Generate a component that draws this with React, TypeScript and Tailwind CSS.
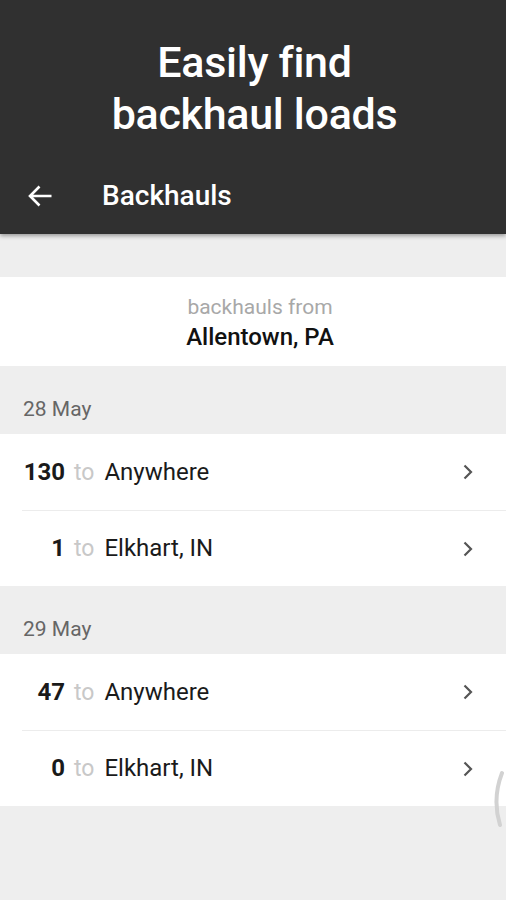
import React from 'react';

type Row = { count: number; dest: string };
type Group = { date: string; rows: Row[] };

const groups: Group[] = [
  { date: '28 May', rows: [{ count: 130, dest: 'Anywhere' }, { count: 1, dest: 'Elkhart, IN' }] },
  { date: '29 May', rows: [{ count: 47, dest: 'Anywhere' }, { count: 0, dest: 'Elkhart, IN' }] },
];

const Chevron = () => (
  <svg width="12" height="16" viewBox="0 0 12 16" fill="none" className="text-[#555]">
    <path d="M2.5 1.5 L9 8 L2.5 14.5" stroke="currentColor" strokeWidth="2.2" />
  </svg>
);

const BackArrow = () => (
  <svg width="26" height="22" viewBox="0 0 26 22" fill="none" className="text-white">
    <path d="M24.5 11 H3 M12.5 1.5 L3 11 L12.5 20.5" stroke="currentColor" strokeWidth="2.6" />
  </svg>
);

const App: React.FC = () => {
  return (
    <div className="relative min-h-[900px] w-[506px] bg-[#eeeeee] font-['Roboto',sans-serif] overflow-hidden">
      <header className="bg-[#303030] h-[234px] shadow-[0_2px_4px_rgba(0,0,0,0.35)] relative z-10">
        <h1 className="pt-[36px] pl-[3px] text-center text-white text-[43px] font-medium leading-[52px] tracking-[-0.3px]">
          Easily find
          <br />
          backhaul loads
        </h1>
        <div className="flex items-center mt-[30px] h-[52px]">
          <div className="w-[102px] pl-[27px] flex items-center">
            <BackArrow />
          </div>
          <span className="text-white text-[28px] font-medium">Backhauls</span>
        </div>
      </header>

      <div className="h-[43px]" />

      <section className="bg-white h-[89px] flex flex-col items-center justify-center pt-[2px] pl-[14px]">
        <p className="text-[#a8a8a8] text-[21px] leading-[28px]">backhauls from</p>
        <p className="text-[#111] text-[24px] font-medium leading-[32px]">Allentown, PA</p>
      </section>

      {groups.map((g) => (
        <div key={g.date}>
          <div className="h-[68px] flex items-end pb-[9px] pl-[23px] text-[#666] text-[21px]">{g.date}</div>
          <div className="bg-white">
            {g.rows.map((r, i) => (
              <div key={i} className={`ml-[22px] h-[76px] flex items-center pr-[32px] ${i > 0 ? 'border-t border-[#ececec]' : ''}`}>
                <div className="flex items-baseline">
                  <span className="w-[43px] text-right text-[24px] font-bold text-[#1a1a1a]">{r.count}</span>
                  <span className="ml-[9px] text-[23px] text-[#c8c8c8]">to</span>
                  <span className="ml-[10px] text-[24px] text-[#1a1a1a]">{r.dest}</span>
                </div>
                <span className="ml-auto flex items-center">
                  <Chevron />
                </span>
              </div>
            ))}
          </div>
        </div>
      ))}

      <svg className="absolute left-[490px] top-[770px]" width="16" height="60" viewBox="0 0 16 60" fill="none">
        <path d="M12 3 Q2 29 10 55" stroke="#d2d2d2" strokeWidth="4" strokeLinecap="round" />
      </svg>
    </div>
  );
};

export default App;
